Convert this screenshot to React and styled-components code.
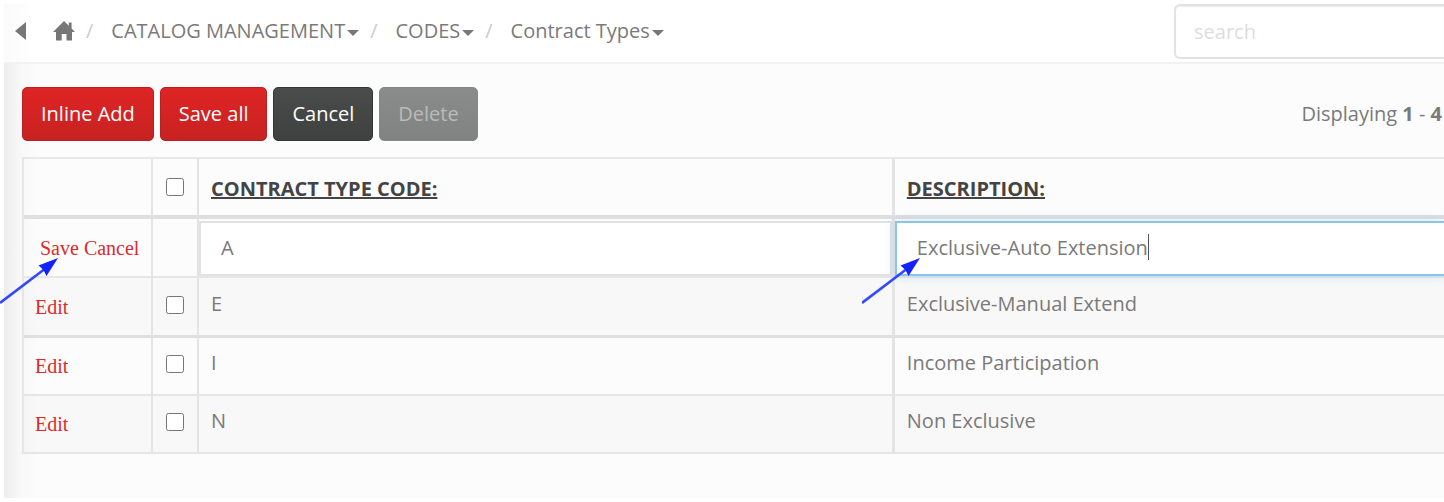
import React, { useEffect, useRef, useState } from "react";
import styled, { createGlobalStyle, css } from "styled-components";

const GlobalStyle = createGlobalStyle`
  * {
    box-sizing: border-box;
  }
  body {
    margin: 0;
    padding: 4px 0 4px 4px;
    background: #fff;
    overflow: hidden;
    font-family: "Open Sans", "Noto Sans", sans-serif;
    font-size: 20px;
    line-height: 28px;
    color: #7a7a7a;
  }
  input,
  button {
    font: inherit;
    color: inherit;
  }
`;

const Page = styled.div`
  position: relative;
  min-height: calc(100vh - 8px);
  background: linear-gradient(
    to right,
    #ededed 0,
    #f6f6f6 12px,
    #fafafa 24px,
    #fcfcfc 36px
  );
`;

const Header = styled.header`
  display: flex;
  align-items: flex-start;
  justify-content: space-between;
  height: 60px;
  border-bottom: 2px solid #f2f2f2;
  background: linear-gradient(to right, #fafafa 0, #fff 30px);
`;

const Breadcrumb = styled.nav`
  display: flex;
  align-items: center;
  height: 54px;
  padding-left: 11px;
`;

const CrumbLink = styled.a`
  display: flex;
  align-items: center;
  color: #7a7a7a;
  text-decoration: none;
`;

const BackLink = styled(CrumbLink)`
  margin-right: 27px;
`;

const Slash = styled.span`
  margin: 0 18px 0 11px;
  color: #ccc;
`;

const Caret = styled.span`
  margin: 3px 0 0 2px;
  border: 6px solid transparent;
  border-top-color: #777;
  border-bottom: 0;
`;

const Search = styled.input`
  width: 270px;
  height: 55px;
  padding: 0 18px;
  border: 2px solid #e2e2e2;
  border-right: 0;
  border-radius: 6px 0 0 6px;
  background: #fff;
  box-shadow: inset 0 1px 1px rgba(0, 0, 0, 0.08);
  outline: none;

  &::placeholder {
    color: #ddd;
    opacity: 1;
  }
`;

const Content = styled.main`
  padding: 23px 0 0 18px;
`;

const Toolbar = styled.div`
  display: flex;
  align-items: center;
  justify-content: space-between;
  padding-right: 2px;
  margin-bottom: 16px;
`;

const Buttons = styled.div`
  display: flex;
  gap: 6px;
`;

const tones = {
  red: css`
    border-color: #b81f1f;
    background: linear-gradient(#df2424, #c72222);
  `,
  dark: css`
    border-color: #333534;
    background: linear-gradient(#4a4c4b, #3f4140);
  `,
};

const Button = styled.button`
  height: 54px;
  padding: 0 18px;
  border: 1px solid;
  border-radius: 5px;
  color: #fff;
  cursor: pointer;
  ${(props) => tones[props.$tone]}

  &:disabled {
    border-color: #868887;
    background: linear-gradient(#8a8c8b, #818382);
    color: #b9bbba;
    cursor: default;
  }
`;

const Table = styled.table`
  width: 100%;
  table-layout: fixed;
  border-collapse: separate;
  border-spacing: 0;
  border-left: 2px solid #e6e6e6;
  border-top: 2px solid #e8e8e8;
`;

const Col = styled.col`
  width: ${(props) => props.$width};
`;

const Th = styled.th`
  height: 60px;
  padding: ${(props) => (props.$label ? "4px 12px 0" : "0 12px")};
  border-right: ${(props) => (props.$wide ? "3px" : "2px")} solid #e4e4e4;
  border-bottom: 4px solid #dfdfdf;
  text-align: left;
  text-transform: uppercase;
  white-space: nowrap;

  &:last-child {
    border-right: 0;
  }
`;

const SortLink = styled.a`
  color: #444;
  font-weight: 700;
  text-decoration: underline;
`;

const Tr = styled.tr`
  background: ${(props) => (props.$striped ? "rgba(0, 0, 0, 0.016)" : "none")};
`;

const cellPadding = (props) => {
  if (props.$field) return "2px 0 0";
  return props.$text ? "0 12px 6px" : "0 11px 4px";
};

const Td = styled.td`
  position: relative;
  height: ${(props) => (props.$strong ? "60px" : "58px")};
  padding: ${cellPadding};
  border-right: ${(props) => (props.$wide ? "3px" : "2px")} solid #e4e4e4;
  border-bottom: ${(props) => (props.$strong ? "3px" : "2px")} solid
    ${(props) => (props.$strong ? "#dfdfdf" : "#e6e6e6")};

  &:last-child {
    border-right: 0;
  }
`;

const CheckCell = styled.div`
  display: flex;
  justify-content: center;

  input {
    width: 18px;
    height: 18px;
    margin: 0;
  }
`;

const Actions = styled.div`
  display: flex;
  gap: 5px;
  padding: 4px 0 0 ${(props) => (props.$editing ? "5px" : "0")};
  font-family: "Liberation Serif", serif;
  white-space: nowrap;

  a {
    color: #dd2b2b;
    text-decoration: none;
  }
`;

const Field = styled.input`
  display: block;
  width: 100%;
  height: 55px;
  padding: 0 18px 2px 20px;
  border: 2px solid ${(props) => (props.$active ? "#8cc5ec" : "#e2e2e2")};
  background: #fff;
  outline: none;
  caret-color: transparent;
  ${(props) =>
    props.$active &&
    css`
      border-right: 0;
      box-shadow: 0 0 10px rgba(102, 175, 233, 0.3);
    `}
`;

const TextCursor = styled.span`
  position: absolute;
  top: 15px;
  width: 1px;
  height: 26px;
  background: #555;
`;

const ArrowSvg = styled.svg`
  position: absolute;
  z-index: 2;
  top: 38px;
  left: ${(props) => props.$left};
  width: 60px;
  height: 48px;
  pointer-events: none;
`;

const Arrow = ({ left }) => (
  <ArrowSvg $left={left} viewBox="0 0 60 48" aria-hidden="true">
    <path d="M0 46 L46 11" stroke="#3347ff" strokeWidth="2.6" fill="none" />
    <path d="M58 1 L38.5 8.5 L43.5 13 L46.5 19 Z" fill="#1423fb" />
  </ArrowSvg>
);

const HomeIcon = () => (
  <svg width="22" height="20" viewBox="0 0 22 20" fill="#777">
    <path d="M11 0 L15.8 4.7 V1.6 H18.6 V7.5 L22 10.9 H19 V19.4 H13.5 V13 H8.7 V19.4 H3 V10.9 H0 Z" />
  </svg>
);

// input with its own text cursor after the last character
const ActiveField = ({ value, onChange, label }) => {
  const inputRef = useRef(null);
  const [left, setLeft] = useState(0);

  useEffect(() => {
    const input = inputRef.current;
    const ctx = document.createElement("canvas").getContext("2d");
    const style = getComputedStyle(input);
    ctx.font = `${style.fontSize} ${style.fontFamily}`;
    setLeft(Math.round(ctx.measureText(value).width) + 22);
  }, [value]);

  return (
    <>
      <Field
        $active
        ref={inputRef}
        aria-label={label}
        value={value}
        onChange={(e) => onChange(e.target.value)}
      />
      <TextCursor style={{ left }} />
    </>
  );
};

const crumbs = ["CATALOG MANAGEMENT", "CODES", "Contract Types"];

const rows = [
  { code: "E", description: "Exclusive-Manual Extend", striped: true, strong: true },
  { code: "I", description: "Income Participation" },
  { code: "N", description: "Non Exclusive", striped: true },
];

const App = () => {
  const [code, setCode] = useState("A");
  const [description, setDescription] = useState("Exclusive-Auto Extension");

  return (
    <Page>
      <GlobalStyle />
      <Header>
        <Breadcrumb aria-label="Breadcrumb">
          <BackLink href="#" aria-label="Back">
            <svg width="11" height="18" viewBox="0 0 11 18" fill="#777">
              <path d="M11 0 V18 L0 9 Z" />
            </svg>
          </BackLink>
          <CrumbLink href="#" aria-label="Home">
            <HomeIcon />
          </CrumbLink>
          {crumbs.map((crumb) => (
            <React.Fragment key={crumb}>
              <Slash>/</Slash>
              <CrumbLink href="#">
                {crumb}
                <Caret />
              </CrumbLink>
            </React.Fragment>
          ))}
        </Breadcrumb>
        <Search type="text" placeholder="search" aria-label="search" />
      </Header>

      <Content>
        <Toolbar>
          <Buttons>
            <Button $tone="red">Inline Add</Button>
            <Button $tone="red">Save all</Button>
            <Button $tone="dark">Cancel</Button>
            <Button $tone="dark" disabled>
              Delete
            </Button>
          </Buttons>
          <span>
            Displaying <b>1</b> - <b>4</b>
          </span>
        </Toolbar>

        <Table>
          <colgroup>
            <Col $width="129px" />
            <Col $width="46px" />
            <Col $width="49%" />
            <Col $width="auto" />
          </colgroup>
          <thead>
            <tr>
              <Th />
              <Th>
                <CheckCell>
                  <input type="checkbox" aria-label="Select all" />
                </CheckCell>
              </Th>
              <Th $wide $label>
                <SortLink href="#">Contract Type Code:</SortLink>
              </Th>
              <Th $label>
                <SortLink href="#">Description:</SortLink>
              </Th>
            </tr>
          </thead>
          <tbody>
            <Tr>
              <Td>
                <Actions $editing>
                  <a href="#">Save</a>
                  <a href="#">Cancel</a>
                </Actions>
                <Arrow left="-24px" />
              </Td>
              <Td />
              <Td $field $wide>
                <Field
                  aria-label="Contract Type Code"
                  value={code}
                  onChange={(e) => setCode(e.target.value)}
                />
              </Td>
              <Td $field>
                <ActiveField
                  label="Description"
                  value={description}
                  onChange={setDescription}
                />
                <Arrow left="-33px" />
              </Td>
            </Tr>
            {rows.map((row) => (
              <Tr key={row.code} $striped={row.striped}>
                <Td $strong={row.strong}>
                  <Actions>
                    <a href="#">Edit</a>
                  </Actions>
                </Td>
                <Td $strong={row.strong}>
                  <CheckCell>
                    <input type="checkbox" aria-label={`Select ${row.code}`} />
                  </CheckCell>
                </Td>
                <Td $text $wide $strong={row.strong}>
                  {row.code}
                </Td>
                <Td $text $strong={row.strong}>
                  {row.description}
                </Td>
              </Tr>
            ))}
          </tbody>
        </Table>
      </Content>
    </Page>
  );
};

export default App;
